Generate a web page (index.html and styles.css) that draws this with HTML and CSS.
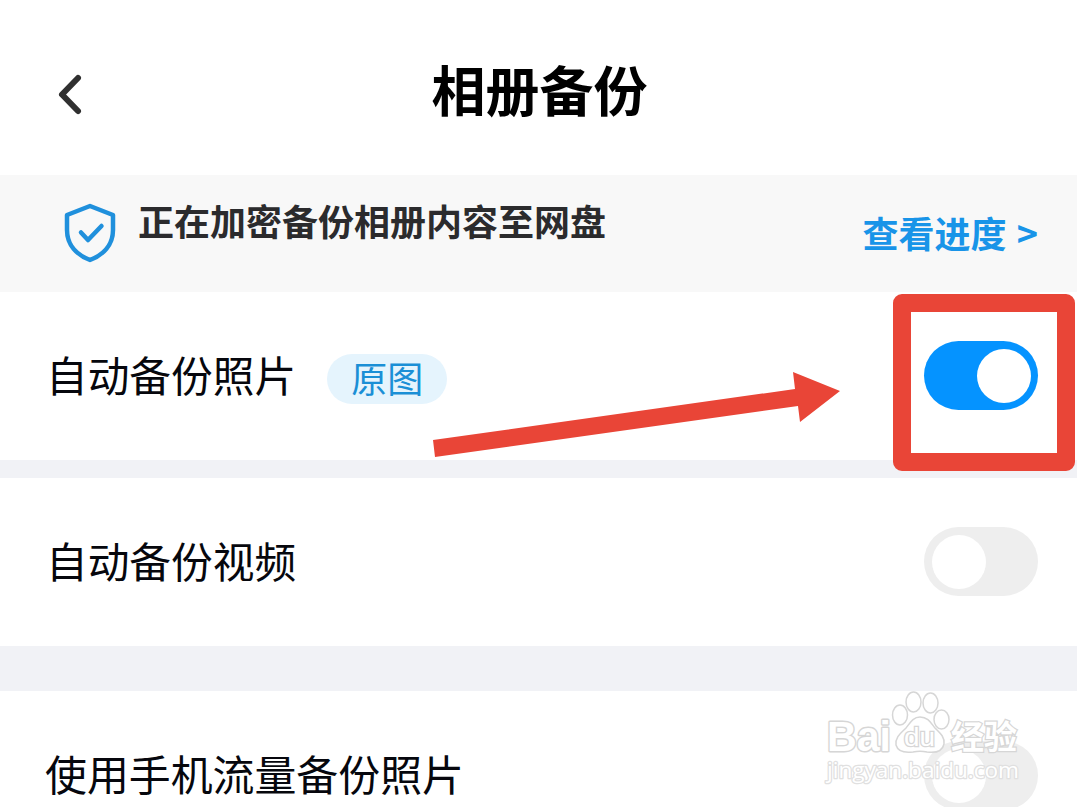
FILE: index.html
```
<!DOCTYPE html>
<html lang="zh-CN">

<head>
    <meta charset="UTF-8">
    <meta name="viewport" content="width=device-width, initial-scale=1.0">
    <title>相册备份</title>
    <link rel="stylesheet" href="styles.css">
</head>

<body>
    <header class="header">
        <svg class="back" viewBox="0 0 32 46">
            <path d="M24 7 L8 23.500 L24 40"/>
        </svg>
        <h1 class="title">相册备份</h1>
    </header>

    <div class="notice">
        <svg class="shield" viewBox="0 0 54 60">
            <path d="M27 3 L50 12 V27 C50 42 40 52 27 57 C14 52 4 42 4 27 V12 Z"/>
            <path d="M18 29.500 L25 37 L38.500 23"/>
        </svg>
        <span class="notice-text">正在加密备份相册内容至网盘</span>
        <a class="progress">查看进度 &gt;</a>
    </div>

    <main>
        <div class="row">
            <span class="label">自动备份照片</span>
            <span class="badge">原图</span>
            <span class="switch on"></span>
        </div>
        <div class="row video">
            <span class="label">自动备份视频</span>
            <span class="switch"></span>
        </div>
        <div class="row mobile">
            <span class="label">使用手机流量备份照片</span>
            <span class="switch"></span>
        </div>
    </main>

    <!-- flecha y recuadro -->
    <svg class="arrow" viewBox="0 0 410 88">
        <path d="M2 70 L364 19 L362 2 L409 21 L369 52 L367 36 L4 87 Z"/>
    </svg>
    <div class="frame"></div>

    <svg class="watermark" viewBox="0 0 210 137">
        <g class="logo">
            <text class="bai" x="7" y="81" font-size="43" textLength="64" lengthAdjust="spacingAndGlyphs">Bai</text>
            <ellipse cx="80" cy="45" rx="7.500" ry="10"/>
            <ellipse cx="93.500" cy="32" rx="7.500" ry="10"/>
            <ellipse cx="110.500" cy="33" rx="7.500" ry="10"/>
            <ellipse cx="121.500" cy="49.500" rx="7.500" ry="9.500"/>
            <path d="M100 47 C108 47 111 53 115 58 C120 63 125 67 124 74 C122 83 114 83 107 82 C102 81 98 81 93 82 C85 83 78 82 76 75 C75 67 81 63 86 58 C90 53 93 47 100 47 Z"/>
            <text class="du" x="84" y="76" font-size="26" textLength="31" lengthAdjust="spacingAndGlyphs">du</text>
            <text class="cn" x="131" y="79" font-size="33" textLength="66">经验</text>
        </g>
        <text class="site" x="7" y="108" font-size="22" textLength="192" lengthAdjust="spacingAndGlyphs">jingyan.baidu.com</text>
    </svg>
</body>

</html>
```

FILE: styles.css
```
body, html {
    margin: 0;
    padding: 0;
    height: 100%;
    overflow: hidden;
    background-color: #fff;
    font-family: "Noto Sans CJK SC", sans-serif;
}

.header {
    display: flex;
    align-items: center;
    box-sizing: border-box;
    height: 175px;
    padding: 12px 54px 0;
}

.back {
    width: 32px;
    height: 46px;
    fill: none;
    stroke: #303030;
    stroke-width: 6;
    stroke-linecap: round;
    stroke-linejoin: round;
}

.title {
    flex: 1;
    margin: 0 30px 9px 0;
    text-align: center;
    font-size: 54px;
    font-weight: 700;
    line-height: 80px;
    color: #000;
}

.notice {
    display: flex;
    align-items: center;
    box-sizing: border-box;
    height: 117px;
    padding: 0 39px 2px 63px;
    background-color: #f8f8f8;
}

.shield {
    width: 54px;
    height: 60px;
    fill: none;
    stroke: #2090dc;
    stroke-width: 4.500;
    stroke-linecap: round;
    stroke-linejoin: round;
}

.notice-text {
    margin: 0 auto 26px 21px;
    font-size: 36px;
    font-weight: 700;
    line-height: 52px;
    color: #2b2b2d;
}

.progress {
    margin-bottom: 2px;
    font-size: 36px;
    font-weight: 700;
    word-spacing: 2px;
    color: #1894e8;
}

.row {
    display: flex;
    align-items: center;
    box-sizing: border-box;
    height: 168px;
    padding: 0 39px 1px 46px;
}

.label {
    margin-bottom: 4px;
    font-size: 41.700px;
    line-height: 60px;
    color: #06070d;
}

.badge {
    height: 50px;
    margin: 6px 0 0 31px;
    padding: 0 24px;
    border-radius: 25px;
    background-color: #e5f4fd;
    font-size: 36px;
    line-height: 46px;
    color: #1b8fd6;
}

.switch {
    box-sizing: border-box;
    width: 114px;
    height: 69px;
    margin-left: auto;
    padding: 7.500px;
    border-radius: 35px;
    background-color: #eee;
}

.switch::before {
    content: "";
    display: block;
    width: 54px;
    height: 54px;
    border-radius: 50%;
    background-color: #fff;
}

.switch.on {
    background-color: #0593ff;
}

.switch.on::before {
    margin-left: auto;
}

.video {
    height: 231px;
    border-top: 18px solid #f1f2f6;
    border-bottom: 45px solid #f1f2f6;
}

.mobile {
    align-items: flex-start;
    height: 116px;
    padding: 50px 39px 0 45px;
    overflow: hidden;
}

.mobile .label {
    margin-top: 2px;
    font-size: 41.900px;
}

.arrow {
    position: absolute;
    left: 431px;
    top: 370px;
    width: 410px;
    height: 88px;
    fill: #e94537;
}

.frame {
    position: absolute;
    left: 893px;
    top: 294px;
    box-sizing: border-box;
    width: 182px;
    height: 177px;
    border: 18px solid #e94537;
    border-radius: 9px;
}

.watermark {
    position: absolute;
    left: 820px;
    top: 670px;
    width: 210px;
    height: 137px;
    fill: #fff;
    stroke: #d6d6d6;
    stroke-width: 1.500;
    font-family: "Liberation Sans", sans-serif;
}

.logo {
    font-weight: 700;
}

.bai {
    stroke-width: 3;
    stroke-linejoin: round;
    paint-order: stroke;
}

.du {
    font-weight: 400;
    stroke-width: 2.500;
    paint-order: stroke;
}

.cn {
    font-family: "Noto Sans CJK SC", sans-serif;
    stroke-width: 2.500;
    paint-order: stroke;
}

.site {
    font-family: "Open Sans", sans-serif;
    stroke: #e0e0e0;
    stroke-width: 2.500;
    stroke-linejoin: round;
    paint-order: stroke;
}
```
